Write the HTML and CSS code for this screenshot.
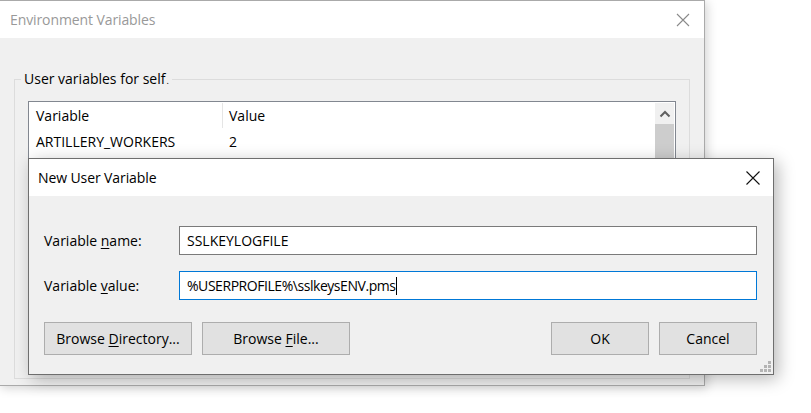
FILE: index.html
```html
<!DOCTYPE html>
<html>
<head>
<meta charset="utf-8">
<link rel="stylesheet" href="styles.css">
</head>
<body>
<div class="win bg-win">
  <div class="titlebar">
    <span class="title inactive">Environment Variables</span>
    <svg class="close" width="14" height="14" viewBox="0 0 14 14"><path d="M1 1L13 13M13 1L1 13" stroke="#8a8a8a" stroke-width="1.1" fill="none"/></svg>
  </div>
  <div class="bg-body">
    <div class="group">
      <div class="legend">User variables for self<span class="dot">.</span></div>
      <div class="listview">
        <div class="lv-main">
          <div class="lv-head">
            <div class="col c1">Variable</div>
            <div class="col c2">Value</div>
          </div>
          <div class="lv-row">
            <div class="col c1">ARTILLERY_WORKERS</div>
            <div class="col c2">2</div>
          </div>
        </div>
        <div class="scrollbar">
          <div class="sb-up"><svg width="12" height="8" viewBox="0 0 12 8"><path d="M1.5 6.5L6 2L10.5 6.5" stroke="#606060" stroke-width="2" fill="none"/></svg></div>
          <div class="sb-thumb"></div>
        </div>
      </div>
    </div>
  </div>
</div>

<div class="win fg-win">
  <div class="titlebar fg-title">
    <span class="title">New User Variable</span>
    <svg class="close" width="16" height="16" viewBox="0 0 16 16"><path d="M1.5 1.5L14.5 14.5M14.5 1.5L1.5 14.5" stroke="#111" stroke-width="1.1" fill="none"/></svg>
  </div>
  <div class="fg-body">
    <div class="field">
      <label class="lbl">Variable <u>n</u>ame:</label>
      <div class="input"><span>SSLKEYLOGFILE</span></div>
    </div>
    <div class="field">
      <label class="lbl">Variable <u>v</u>alue:</label>
      <div class="input focused"><span class="val">%USERPROFILE%\sslkeysENV.pms</span><span class="caret"></span></div>
    </div>
    <div class="buttons">
      <div class="btn-group">
        <div class="btn wide"><span>Browse <u>D</u>irectory...</span></div>
        <div class="btn wide"><span>Browse <u>F</u>ile...</span></div>
      </div>
      <div class="btn-group">
        <div class="btn"><span>OK</span></div>
        <div class="btn"><span>Cancel</span></div>
      </div>
    </div>
    <div class="grip">
      <svg width="12" height="12" viewBox="0 0 12 12" fill="#b4b4b4"><rect x="9" y="0" width="3" height="3"/><rect x="5" y="4" width="3" height="3"/><rect x="9" y="4" width="3" height="3"/><rect x="1" y="8" width="3" height="3"/><rect x="5" y="8" width="3" height="3"/><rect x="9" y="8" width="3" height="3"/></svg>
    </div>
  </div>
</div>
</body>
</html>
```

FILE: styles.css
```css
* { box-sizing: border-box; }
html, body {
  margin: 0;
  padding: 0;
  background: #ffffff;
  width: 811px;
  height: 413px;
  overflow: hidden;
  font-family: "Open Sans", "Noto Sans", "Liberation Sans", sans-serif;
  font-size: 14px;
  color: #000;
}
u { text-decoration: underline; text-underline-offset: 2px; }

.win {
  position: absolute;
  display: flex;
  flex-direction: column;
  background: #f0f0f0;
}
.bg-win {
  left: -1px;
  top: 0;
  width: 706px;
  height: 386px;
  border: 1px solid #aaaaaa;
  box-shadow: 2px 2px 10px rgba(0,0,0,0.18);
}
.titlebar {
  height: 37px;
  background: #ffffff;
  display: flex;
  align-items: center;
  justify-content: space-between;
  padding: 0 14px 0 10px;
  flex: none;
}
.title { font-size: 14px; letter-spacing: -0.1px; }
.title.inactive { color: #999999; }

.bg-body {
  flex: 1;
  padding: 41px 14px 6px 14px;
  display: flex;
}
.group {
  position: relative;
  flex: 1;
  border: 1px solid #dcdcdc;
  padding: 21px 13px 0 13px;
  display: flex;
}
.legend {
  position: absolute;
  left: 6px;
  top: -11px;
  background: #f0f0f0;
  padding: 0 3px;
  line-height: 20px;
  color: #000;
}
.legend .dot { font-size: 9px; margin-left: 1px; }
.listview {
  flex: 1;
  background: #fff;
  border: 1px solid #828790;
  display: flex;
  height: 200px;
}
.lv-main { flex: 1; }
.lv-head, .lv-row { display: flex; }
.lv-head { height: 27px; align-items: center; }
.lv-row { height: 24px; align-items: center; }
.col { padding-left: 7px; white-space: nowrap; }
.c1 { width: 194px; }
.lv-head .c1 { border-right: 1px solid #e5e5e5; height: 25px; display: flex; align-items: center; }
.c2 { padding-left: 6px; }
.scrollbar {
  width: 19px;
  margin: 1px 1px 0 0;
  background: #f0f0f0;
  display: flex;
  flex-direction: column;
}
.sb-up {
  height: 21px;
  display: flex;
  align-items: center;
  justify-content: center;
}
.sb-thumb {
  height: 60px;
  background: #cdcdcd;
}

.fg-win {
  left: 28px;
  top: 158px;
  width: 746px;
  height: 217px;
  border: 1px solid #6e6e6e;
  box-shadow: 4px 4px 16px rgba(0,0,0,0.28);
}
.fg-title { padding: 0 12px 0 9px; }
.fg-body {
  position: relative;
  flex: 1;
  padding: 30px 15px 18px 15px;
  display: flex;
  flex-direction: column;
}
.field {
  display: flex;
  align-items: center;
  margin-bottom: 16px;
}
.lbl { width: 135px; flex: none; }
.input {
  width: 578px;
  height: 29px;
  background: #fff;
  border: 1px solid #7a7a7a;
  padding: 0 7px;
  display: flex;
  align-items: center;
  white-space: nowrap;
}
.input.focused { border-color: #0078d7; }
.val { letter-spacing: -0.45px; }
.caret {
  display: inline-block;
  width: 1px;
  height: 18px;
  background: #000;
  margin-left: 1px;
}
.buttons {
  display: flex;
  justify-content: space-between;
  margin-top: 6px;
  padding-right: 1px;
}
.btn-group { display: flex; gap: 10px; }
.btn {
  width: 98px;
  height: 33px;
  background: #e1e1e1;
  border: 1px solid #adadad;
  display: flex;
  align-items: center;
  justify-content: center;
  white-space: nowrap;
}
.btn.wide { width: 148px; }
.grip {
  position: absolute;
  right: 2px;
  bottom: 1px;
  line-height: 0;
}
```
